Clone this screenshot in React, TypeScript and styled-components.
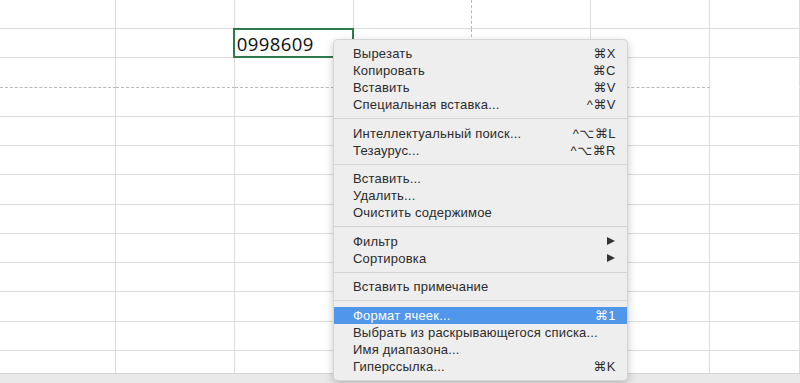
import React from 'react'
import styled, { createGlobalStyle, css } from 'styled-components'

const GlobalStyle = createGlobalStyle`
  html, body {
    margin: 0;
    padding: 0;
    background: #ffffff;
    overflow: hidden;
  }
`

const COLS = 7
const ROWS = 13

const Sheet = styled.div`
  position: relative;
  width: 800px;
  height: 383px;
  overflow: hidden;
  background: #ffffff;
  display: flex;
  flex-direction: column;
`

const Grid = styled.div`
  flex: 1;
  display: grid;
  grid-template-columns: 116px repeat(5, 118.8px) 1fr;
  grid-template-rows: 29px repeat(11, 29.25px) 1fr;
`

const Cell = styled.div<{ $dashRight?: boolean; $dashBottom?: boolean; $noBottom?: boolean; $last?: boolean }>`
  position: relative;
  box-sizing: border-box;
  border-right: 1px ${({ $dashRight }) => ($dashRight ? 'dashed #b8b8b8' : 'solid #dcdcdc')};
  border-bottom: 1px ${({ $dashBottom }) => ($dashBottom ? 'dashed #b8b8b8' : 'solid #dcdcdc')};
  ${({ $noBottom }) => $noBottom && css`border-bottom-color: transparent;`}
  ${({ $last }) => $last && css`border-bottom: none;`}
`

const Selected = styled.div`
  position: absolute;
  left: -2px;
  top: -1px;
  right: -1px;
  bottom: -1px;
  border: 2px solid #2f7a4c;
  box-sizing: border-box;
  display: flex;
  align-items: center;
  padding-left: 2px;
  font-family: 'Open Sans', 'Liberation Sans', sans-serif;
  font-size: 18.5px;
  letter-spacing: 0.4px;
  color: #0e0e0e;
  z-index: 1;
`

const StatusBar = styled.div`
  height: 9px;
  background: #e9e9e9;
  border-top: 1px solid #d4d4d4;
`

const Menu = styled.div`
  position: absolute;
  left: 333px;
  top: 39px;
  width: 295px;
  box-sizing: border-box;
  padding: 5px 0 5px;
  background: #eeeeee;
  border: 1px solid rgba(0, 0, 0, 0.1);
  border-radius: 5px;
  box-shadow: 0 3px 9px rgba(0, 0, 0, 0.22);
  font-family: 'Liberation Sans', 'DejaVu Sans', sans-serif;
  font-size: 13px;
  letter-spacing: 0.2px;
  color: #2b2b2b;
  z-index: 5;
`

const Item = styled.div<{ $active?: boolean }>`
  height: 17px;
  display: flex;
  align-items: center;
  justify-content: space-between;
  padding: 0 11px 0 19px;
  white-space: nowrap;
  ${({ $active }) =>
    $active &&
    css`
      background: #5096ea;
      color: #ffffff;
    `}
`

const Shortcut = styled.span`
  font-family: 'Liberation Sans', 'DejaVu Sans', sans-serif;
  font-size: 13px;
  letter-spacing: 0.5px;
`

const Arrow = styled.span`
  width: 0;
  height: 0;
  margin-right: 1px;
  border-top: 4.5px solid transparent;
  border-bottom: 4.5px solid transparent;
  border-left: 8px solid #333333;
`

const Separator = styled.div`
  height: 11.5px;
  display: flex;
  align-items: center;

  &::after {
    content: '';
    flex: 1;
    height: 1px;
    background: #d3d3d3;
  }
`

type Entry = { label: string; key?: string; sub?: boolean; active?: boolean } | 'sep'

const entries: Entry[] = [
  { label: 'Вырезать', key: '⌘X' },
  { label: 'Копировать', key: '⌘C' },
  { label: 'Вставить', key: '⌘V' },
  { label: 'Специальная вставка...', key: '^⌘V' },
  'sep',
  { label: 'Интеллектуальный поиск...', key: '^⌥⌘L' },
  { label: 'Тезаурус...', key: '^⌥⌘R' },
  'sep',
  { label: 'Вставить...' },
  { label: 'Удалить...' },
  { label: 'Очистить содержимое' },
  'sep',
  { label: 'Фильтр', sub: true },
  { label: 'Сортировка', sub: true },
  'sep',
  { label: 'Вставить примечание' },
  'sep',
  { label: 'Формат ячеек...', key: '⌘1', active: true },
  { label: 'Выбрать из раскрывающегося списка...' },
  { label: 'Имя диапазона...' },
  { label: 'Гиперссылка...', key: '⌘K' },
]

export default function App() {
  const cells = []
  for (let r = 0; r < ROWS; r++) {
    for (let c = 0; c < COLS; c++) {
      const dashRight = c === 3 && r <= 2
      const dashBottom = r === 2 && c <= 5
      const noBottom = r === 2 && c === 6
      cells.push(
        <Cell
          key={`${r}-${c}`}
          $dashRight={dashRight}
          $dashBottom={dashBottom}
          $noBottom={noBottom}
          $last={r === ROWS - 1}
        >
          {r === 1 && c === 2 && <Selected>0998609</Selected>}
        </Cell>
      )
    }
  }

  return (
    <>
      <GlobalStyle />
      <Sheet>
        <Grid>{cells}</Grid>
        <StatusBar />
        <Menu>
          {entries.map((e, i) =>
            e === 'sep' ? (
              <Separator key={i} />
            ) : (
              <Item key={i} $active={e.active}>
                <span>{e.label}</span>
                {e.key && <Shortcut>{e.key}</Shortcut>}
                {e.sub && <Arrow />}
              </Item>
            )
          )}
        </Menu>
      </Sheet>
    </>
  )
}
